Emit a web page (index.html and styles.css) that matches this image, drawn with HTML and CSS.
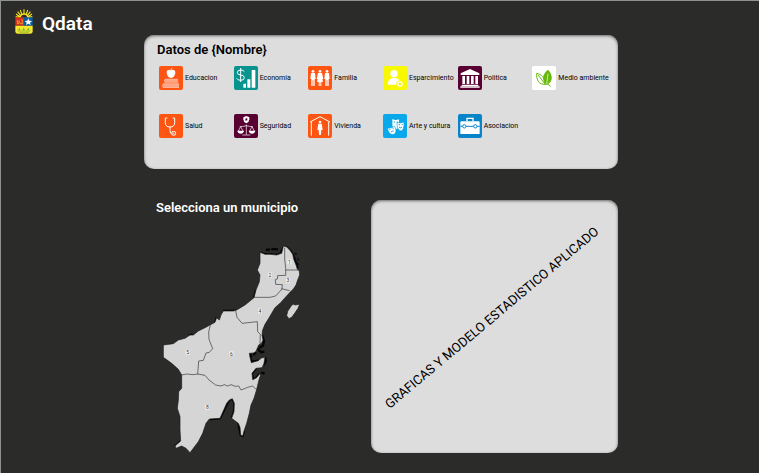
FILE: index.html
```html
<!DOCTYPE html>
<html lang="es">
<head>
<meta charset="utf-8">
<meta name="viewport" content="width=device-width, initial-scale=1">
<title>Qdata</title>
<link rel="stylesheet" href="styles.css">
</head>
<body>
<header class="site-header">
  <svg class="crest" viewBox="0 0 54 75" aria-hidden="true">
    <g stroke="#f7e017" stroke-width="3.4">
      <path d="M27 22V1M22 22 16 3M32 22 38 3M19 23 8 8M35 23 46 8M17 25 3 15M37 25 51 15M16 26 2 23M38 26 52 23"/>
    </g>
    <path d="M13 25a14 12 0 0 1 28 0z" fill="#f7e017"/>
    <path d="M18 25a9 8 0 0 1 18 0z" fill="#2b2b2a"/>
    <path d="M1 25h26v25H1z" fill="#d32a20"/>
    <path d="M27 25h26v25H27z" fill="#075da5"/>
    <path d="M1 50h52v17q0 7-8 7H9q-8 0-8-7z" fill="#f7e72b"/>
    <path d="M7 32v12h5V34M12 39h4M18 32h4v12M15 44h8" fill="none" stroke="#f6c82a" stroke-width="2"/>
    <path d="m40 28 3 7 8 1-6 5 2 7-7-4-7 4 2-7-6-5 8-1z" fill="#fff"/>
    <path d="m9 64 4-8 4 8zM22 64l4-8 4 8zM36 64l4-8 4 8z" fill="#6fb23b"/>
    <path d="M7 66h40M13 70h29" stroke="#6fb23b" stroke-width="2"/>
  </svg>
  <h1 class="brand">Qdata</h1>
</header>

<main class="content">
  <section class="panel topics">
    <h2 class="heading">Datos de {Nombre}</h2>
    <ul class="topic-list">
      <li class="topic">
        <svg class="icon orange" viewBox="0 0 72 72" aria-hidden="true">
          <path d="M36 13c-5-4-13-2-13 6 0 9 6 17 13 17s13-8 13-17c0-8-8-10-13-6z" fill="#fff"/>
          <path d="M36 13q0-5 4-8" fill="none" stroke="#fff" stroke-width="2"/>
          <path d="M17 38h40v12H17q-4-6 0-12zM12 52h48v14H12q-5-7 0-14z" fill="#ffb398"/>
          <path d="M17 43h40M17 47h40M12 57h48M12 61h48" stroke="#ff7c49"/>
        </svg>
        <span>Educacion</span>
      </li>
      <li class="topic">
        <svg class="icon teal" viewBox="0 0 72 72" aria-hidden="true">
          <path d="M31 17q-3-5-11-5-10 0-10 8 0 6 10 7 11 1 11 8 0 8-11 8-9 0-12-6M20 6v42" fill="none" stroke="#fff" stroke-width="3"/>
          <path d="M28 53h8v12h-8zM40 40h9v25h-9zM53 12h11v53H53z" fill="#fff"/>
        </svg>
        <span>Economia</span>
      </li>
      <li class="topic">
        <svg class="icon orange" viewBox="0 0 72 72" aria-hidden="true">
          <g fill="#fff">
            <circle cx="15" cy="16" r="4"/><circle cx="36" cy="16" r="4"/><circle cx="57" cy="16" r="4"/>
            <path d="M9 21h12l2 17-3 2v20h-4V43h-2v17h-4V40l-3-2zM30 21h12l4 18-3 1 2 8h-5v12h-3V48h-2v12h-3V48h-5l2-8-3-1zM51 21h12l2 17-3 2v20h-4V43h-2v17h-4V40l-3-2z"/>
          </g>
        </svg>
        <span>Familia</span>
      </li>
      <li class="topic">
        <svg class="icon yellow" viewBox="0 0 72 72" aria-hidden="true">
          <circle cx="33" cy="23" r="11" fill="#fff"/>
          <path d="M15 56v-7q2-10 14-13h9q13 3 14 13v7z" fill="#fff"/>
          <circle cx="51" cy="54" r="10" fill="#fff" stroke="#f8f800" stroke-width="3"/>
          <path d="M46 54h10M51 49v10" stroke="#e9e900" stroke-width="3"/>
        </svg>
        <span>Esparcimiento</span>
      </li>
      <li class="topic">
        <svg class="icon plum" viewBox="0 0 72 72" aria-hidden="true">
          <path d="m36 9 28 13v5H8v-5zM13 30h8v24h-8zM26 30h8v24h-8zM39 30h8v24h-8zM52 30h8v24h-8zM11 56h50v4H11zM7 61h58v4H7z" fill="#fff"/>
        </svg>
        <span>Politica</span>
      </li>
      <li class="topic">
        <svg class="icon white" viewBox="0 0 72 72" aria-hidden="true">
          <path d="M42 54C27 40 33 22 48 11c14 14 16 34 0 43z" fill="#66b80c"/>
          <path d="M48 23 44 56" stroke="#fff" stroke-width="2"/>
          <path d="M14 22c15 3 25 13 25 33-18 1-26-12-25-33zM18 27l22 28q14-1 15 7" fill="none" stroke="#66b80c" stroke-width="3"/>
        </svg>
        <span>Medio ambiente</span>
      </li>
      <li class="topic">
        <svg class="icon orange" viewBox="0 0 72 72" aria-hidden="true">
          <path d="M25 12h-6v14q0 13 14 13t14-13V12h-6M33 39v11q0 10 8 10" fill="none" stroke="#fff" stroke-width="3"/>
          <circle cx="44" cy="58" r="6" fill="none" stroke="#fff" stroke-width="3"/>
          <circle cx="44" cy="58" r="2" fill="#fff"/>
        </svg>
        <span>Salud</span>
      </li>
      <li class="topic">
        <svg class="icon plum" viewBox="0 0 72 72" aria-hidden="true">
          <path d="m37 6 9 4v6q0 8-9 12-9-4-9-12v-6z" fill="#fff"/>
          <path d="m37 10 1 4h4l-3 3 1 4-3-2-3 2 1-4-3-3h4z" fill="#580032"/>
          <path d="M37 32v30M25 63h24M17 38q10 0 20-3 10 3 20 3M20 38l-8 15M20 38l8 15M54 38l-8 15M54 38l8 15" fill="none" stroke="#fff" stroke-width="2"/>
          <path d="M10 50h20q-2 9-10 9t-10-9zM44 50h20q-2 9-10 9t-10-9z" fill="#fff"/>
        </svg>
        <span>Seguridad</span>
      </li>
      <li class="topic">
        <svg class="icon orange" viewBox="0 0 72 72" aria-hidden="true">
          <path d="M6 24 36 8l30 16M10 24v41M62 24v41" fill="none" stroke="#fff" stroke-width="3"/>
          <circle cx="36" cy="24" r="4" fill="#fff"/>
          <path d="M31 29h10l3 18-4 1-1 15h-6l-1-15-4-1z" fill="#fff"/>
        </svg>
        <span>Vivienda</span>
      </li>
      <li class="topic">
        <svg class="icon sky" viewBox="0 0 72 72" aria-hidden="true">
          <path d="M28 15q9 5 20 1v20q-2 9-9 9-12-3-11-16z" fill="#fff"/>
          <path d="M42 25q10 4 21-1 1 25-9 27-13-2-12-26z" fill="#fff" stroke="#08a8ea" stroke-width="2"/>
          <path d="M13 42q12 2 22-5 9 17-2 24-15 4-20-19z" fill="#fff" stroke="#08a8ea" stroke-width="2"/>
          <path d="M32 24h4M41 24h3M47 32h4M56 32h3M48 39q5 5 9 0M19 47h3M29 44h3M24 54q4-5 8-2" fill="none" stroke="#08a8ea" stroke-width="3"/>
        </svg>
        <span>Arte y cultura</span>
      </li>
      <li class="topic">
        <svg class="icon blue" viewBox="0 0 72 72" aria-hidden="true">
          <path d="M27 22V13h18v9" fill="none" stroke="#fff" stroke-width="4"/>
          <path d="M10 22h52q3 0 3 4v34H7V26q0-4 3-4z" fill="#fff"/>
          <path d="M7 37h58" stroke="#0785c8" stroke-width="3"/>
          <circle cx="19" cy="37" r="5" fill="#fff" stroke="#0785c8" stroke-width="3"/>
          <circle cx="52" cy="37" r="5" fill="#fff" stroke="#0785c8" stroke-width="3"/>
        </svg>
        <span>Asociacion</span>
      </li>
    </ul>
  </section>

  <div class="workspace">
    <section class="region">
      <h2 class="heading light">Selecciona un municipio</h2>
      <svg class="map" viewBox="39 30 414 630" role="img" aria-label="Mapa de municipios">
        <path class="shore" d="M330 53 345 58 362 58 380 60 392 55 401 36M348 45 360 43M364 42 384 43M408 36 422 48 430 62 436 78 443 100M436 58 438 54M443 74 446 72M440 86 445 90M336 300 342 318 339 332 328 338M298 355 304 364 299 368 306 380 325 377M318 352 310 360M322 340 334 352 343 350M345 367 347 378 341 390M318 400 306 415 308 432 318 430 330 415M334 412 344 416M247 490 238 495 224 521 210 550 180 552M247 492 254 505 252 530 245 550M265 565 272 600 278 603 282 588M92 618 75 635M196 262 200 248M116 303 128 298M220 228 235 228 250 228 258 226M312 188 318 165"/>
        <path class="land" d="M400 33 410 36 420 46 428 58 432 75 438 90 442 103 448 108 449 120 443 135 438 150 430 162 420 172 405 188 392 203 375 218 365 235 355 252 345 268 338 285 336 300 339 315 335 324 326 330 321 342 317 350 310 354 298 355 300 367 304 383 325 377 334 369 345 367 342 385 336 398 318 400 306 415 308 434 320 428 330 415 331 422 327 434 322 455 318 470 312 490 303 510 298 535 290 565 283 585 278 603 272 600 270 577 265 565 245 550 252 530 253 505 247 491 238 495 230 505 222 523 210 550 178 552 168 565 158 595 145 620 130 640 120 653 108 640 95 633 78 640 75 633 92 618 90 585 90 545 82 520 85 495 86 470 95 460 95 420 85 403 65 385 40 367 40 330 70 326 85 315 105 310 120 300 130 300 145 288 165 278 180 270 195 262 200 248 208 255 213 240 220 228 235 228 250 228 260 225 285 210 312 188 318 165 328 140 330 120 322 105 330 85 330 52 345 58 360 58 380 60 395 55z"/>
        <path class="land" d="M410 242 413 229 423 214 429 207 435 210 449 208 444 220 436 232 426 246 417 251z"/>
        <path class="border" d="M404 38V72L407 100V121L383 122 382 132 376 134 377 148 397 149 396 162 377 183 360 187H312M407 105H445M394 161 419 167M257 227 261 247 276 265 322 260 323 290 331 298 330 326M181 271 176 291 177 313 188 341 178 352 168 354 160 376 146 378 143 418M95 420 110 417 129 419 143 417 165 421 177 435 197 450 213 453 223 449 233 453 243 449 256 454 266 453 273 465 293 457 308 453 318 463"/>
        <g class="tag">
          <rect x="412" y="73" width="12" height="14"/><rect x="354" y="113" width="12" height="14"/>
          <rect x="408" y="129" width="12" height="14"/><rect x="324" y="221" width="12" height="14"/>
          <rect x="107" y="345" width="12" height="14"/><rect x="238" y="349" width="12" height="14"/>
          <rect x="166" y="510" width="12" height="14"/>
        </g>
        <g class="number">
          <text x="418" y="86">1</text><text x="360" y="126">2</text><text x="414" y="142">3</text>
          <text x="330" y="234">4</text><text x="113" y="358">5</text><text x="244" y="362">6</text>
          <text x="172" y="523">8</text>
        </g>
      </svg>
    </section>
    <section class="panel charts">
      <p class="placeholder">GRAFICAS Y MODELO ESTADISTICO APLICADO</p>
    </section>
  </div>
</main>
</body>
</html>
```
FILE: styles.css
```css
* { box-sizing: border-box; }

body {
  margin: 0;
  min-height: 100vh;
  border-top: 1px solid #8e9391;
  border-left: 1px solid #8e9391;
  background: #2b2b2a;
  color: #000;
  font-family: Roboto, "Liberation Sans", sans-serif;
}

h1, h2, p, ul { margin: 0; padding: 0; }

.site-header {
  display: flex;
  align-items: flex-start;
  gap: 9px;
  height: 34px;
  padding: 8px 14px 0;
}

.crest { width: 18px; height: 25px; }

.brand {
  padding-top: 3px;
  color: #fff;
  font-size: 19px;
  font-weight: 600;
  line-height: 24px;
}

.content { padding: 0 141px 20px 143px; }

.panel {
  border-radius: 10px;
  background: #ddd;
  box-shadow: inset 0 1px 3px #666;
}

.topics { min-height: 134px; padding: 7px 11px 0 13px; }

.heading { font-size: 13px; font-weight: 600; line-height: 16px; }
.light { color: #fff; }

.topic-list {
  display: grid;
  grid-template-columns: repeat(6, minmax(0, 1fr));
  row-gap: 24px;
  padding: 8px 0 0 2px;
  list-style: none;
}

.topic {
  display: flex;
  align-items: center;
  gap: 2px;
  font-size: 7px;
  line-height: 12px;
  white-space: nowrap;
}

.icon { flex: none; width: 24px; height: 24px; border-radius: 2px; }
.orange { background: #ff5512; }
.teal { background: #07938e; }
.yellow { background: #f8f800; }
.plum { background: #580032; }
.white { background: #fff; }
.sky { background: #08a8ea; }
.blue { background: #0785c8; }

.workspace {
  display: grid;
  grid-template-columns: minmax(0, 227fr) minmax(0, 247fr);
  align-items: start;
  padding-top: 31px;
}

.region { padding-left: 12px; }
.map { display: block; width: 138px; height: 210px; margin: 29px 0 0 7px; }
.land { fill: #d5d5d5; stroke: #1a1a1a; stroke-width: 2; stroke-linejoin: round; }
.shore { fill: none; stroke: #050505; stroke-width: 7; stroke-linejoin: round; }
.border { fill: none; stroke: #333; stroke-width: 2; }
.tag { fill: #f2f2f2; }
.number { fill: #333; font-size: 15px; text-anchor: middle; }

.charts {
  display: flex;
  align-items: center;
  justify-content: center;
  min-height: 253px;
  padding: 0 4px 18px 0;
}

.placeholder {
  font-size: 13px;
  line-height: 16px;
  white-space: nowrap;
  transform: rotate(-40deg);
}
```
